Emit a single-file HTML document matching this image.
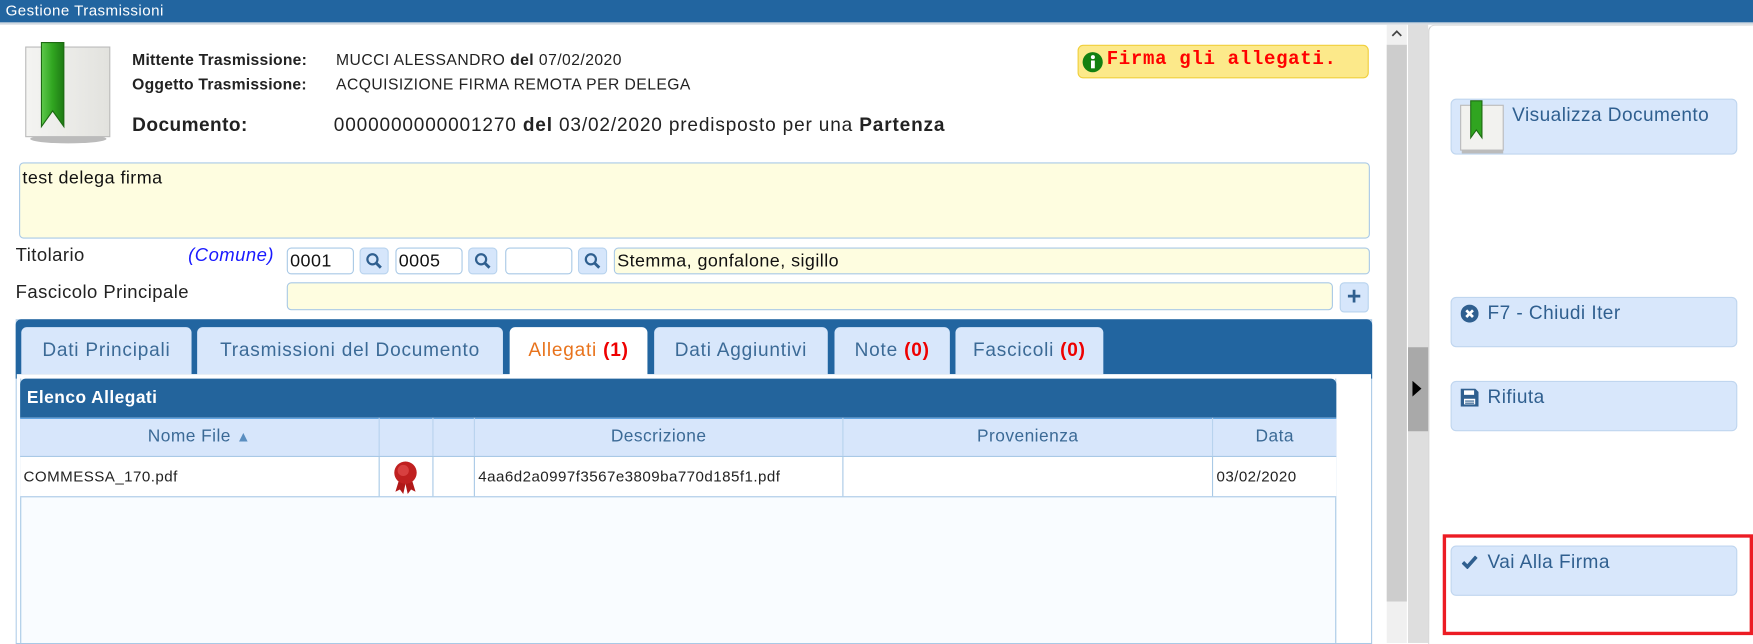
<!DOCTYPE html>
<html><head><meta charset="utf-8"><style>
html,body{margin:0;padding:0;width:1753px;height:643px;overflow:hidden;background:#fff}
#w{position:absolute;left:0;top:0;width:1565px;height:574px;transform:scale(1.12013);transform-origin:0 0;font-family:"Liberation Sans",sans-serif;color:#222;letter-spacing:0.4px}
.a{position:absolute}
.in{position:absolute;background:#fefde0;border:1px solid #a9c9e6;border-radius:4px;box-sizing:border-box;font-size:16px;padding:1px 2px;line-height:22px;color:#111}
.wh{background:#fff}
.sb{position:absolute;background:#d6e6fb;border:1px solid #b8d3ee;border-radius:4px;box-sizing:border-box}
.tab{position:absolute;top:292px;height:42px;background:#d8e7fb;border-radius:5px 5px 0 0;box-sizing:border-box;font-size:17px;color:#3b6a96;text-align:center;line-height:42px;letter-spacing:0.7px}
.red{color:#e00;font-weight:bold}
.btn{position:absolute;left:1295px;width:256px;background:#d8e7fb;border:1px solid #c0d6ef;border-radius:5px;box-sizing:border-box;font-size:17px;color:#2f5f8f}
.th{position:absolute;top:373px;height:34px;line-height:34px;font-size:15.5px;color:#3b6a96;text-align:center;border-right:1px solid #b8d3ee;box-sizing:border-box}
.td{position:absolute;top:408px;height:35px;line-height:35px;font-size:13.5px;color:#222;border-right:1px solid #a9c9e6;box-sizing:border-box;padding-left:3px}
</style></head><body><div id="w">
<div class="a" style="left:0;top:0;width:1565px;height:20px;background:#2265a0;color:#fff;font-size:13.5px;line-height:20px;padding-left:5px;box-sizing:border-box">Gestione Trasmissioni</div>
<div class="a" style="left:0;top:20px;width:1565px;height:2px;background:#d0d8e0"></div>
<svg class="a" style="left:20px;top:35px" width="82" height="95" viewBox="0 0 82 95"><defs><linearGradient id="g" x1="0" x2="1"><stop offset="0" stop-color="#f4f4f2"/><stop offset="1" stop-color="#e2e2de"/></linearGradient><linearGradient id="gr" x1="0" x2="1"><stop offset="0" stop-color="#5cc84a"/><stop offset=".5" stop-color="#30a520"/><stop offset="1" stop-color="#1e7a14"/></linearGradient></defs><ellipse cx="41" cy="89" rx="34" ry="4" fill="#bbb"/><rect x="3" y="7" width="75" height="80" fill="url(#g)" stroke="#bbb"/><path d="M17 3h20v75l-10-14-10 14z" fill="url(#gr)" stroke="#1d6a12"/></svg>
<div class="a" style="left:118px;top:42px;font-size:14px;line-height:22px;font-weight:bold;letter-spacing:0.2px">Mittente Trasmissione:<br>Oggetto Trasmissione:</div>
<div class="a" style="left:300px;top:42px;font-size:14px;line-height:22px">MUCCI ALESSANDRO <b>del</b> 07/02/2020<br>ACQUISIZIONE FIRMA REMOTA PER DELEGA</div>
<div class="a" style="left:118px;top:102px;font-size:17px;font-weight:bold">Documento:</div>
<div class="a" style="left:298px;top:102px;font-size:17px;letter-spacing:0.75px">0000000000001270 <b>del</b> 03/02/2020 predisposto per una <b>Partenza</b></div>
<div class="a" style="left:962px;top:40px;width:260px;height:30px;background:#fce98a;border:1px solid #f0cf3c;border-radius:5px;box-sizing:border-box"></div>
<svg class="a" style="left:966px;top:46px" width="19" height="19"><circle cx="9.5" cy="9.5" r="9" fill="#138010"/><rect x="8" y="8" width="3.4" height="7" fill="#fff"/><circle cx="9.7" cy="5" r="1.8" fill="#fff"/></svg>
<div class="a" style="left:988px;top:44px;font-family:'Liberation Mono',monospace;font-size:17px;font-weight:bold;color:#f00;letter-spacing:0.6px">Firma gli allegati.</div>
<div class="in" style="left:17px;top:145px;width:1206px;height:68px;padding:3px 2px">test delega firma</div>
<div class="a" style="left:14px;top:219px;font-size:16.5px">Titolario</div>
<div class="a" style="left:168px;top:219px;font-size:16.5px;font-style:italic;color:#1a1aff">(Comune)</div>
<div class="in wh" style="left:256px;top:221px;width:60px;height:24px">0001</div>
<div class="sb" style="left:321px;top:221px;width:26px;height:24px"></div>
<div class="in wh" style="left:353px;top:221px;width:60px;height:24px">0005</div>
<div class="sb" style="left:418px;top:221px;width:26px;height:24px"></div>
<div class="in wh" style="left:451px;top:221px;width:60px;height:24px"></div>
<div class="sb" style="left:516px;top:221px;width:26px;height:24px"></div>
<svg class="a" style="left:326px;top:225px" width="16" height="16"><circle cx="6.5" cy="6.5" r="4.5" fill="none" stroke="#2f5f8f" stroke-width="2"/><path d="M10 10l4 4" stroke="#2f5f8f" stroke-width="2.6"/></svg>
<svg class="a" style="left:423px;top:225px" width="16" height="16"><circle cx="6.5" cy="6.5" r="4.5" fill="none" stroke="#2f5f8f" stroke-width="2"/><path d="M10 10l4 4" stroke="#2f5f8f" stroke-width="2.6"/></svg>
<svg class="a" style="left:521px;top:225px" width="16" height="16"><circle cx="6.5" cy="6.5" r="4.5" fill="none" stroke="#2f5f8f" stroke-width="2"/><path d="M10 10l4 4" stroke="#2f5f8f" stroke-width="2.6"/></svg>
<div class="in" style="left:548px;top:221px;width:675px;height:24px">Stemma, gonfalone, sigillo</div>
<div class="a" style="left:14px;top:252px;font-size:16.5px">Fascicolo Principale</div>
<div class="in" style="left:256px;top:252px;width:934px;height:25px"></div>
<div class="sb" style="left:1196px;top:252px;width:26px;height:27px;color:#2f5f8f;font-size:22px;font-weight:bold;text-align:center;line-height:24px">+</div>
<div class="a" style="left:14px;top:285px;width:1211px;height:290px;border:1px solid #a9c9e6;box-sizing:border-box"></div>
<div class="a" style="left:14px;top:285px;width:1211px;height:53px;background:#2265a0;border-radius:5px 5px 0 0"></div>
<div class="tab" style="left:19px;width:152px">Dati Principali</div>
<div class="tab" style="left:176px;width:273px">Trasmissioni del Documento</div>
<div class="tab" style="left:455px;width:123px;background:#fff;color:#e8731c;height:46px">Allegati <span class="red">(1)</span></div>
<div class="tab" style="left:584px;width:155px">Dati Aggiuntivi</div>
<div class="tab" style="left:745px;width:103px">Note <span class="red">(0)</span></div>
<div class="tab" style="left:853px;width:132px">Fascicoli <span class="red">(0)</span></div>
<div class="a" style="left:15px;top:334px;width:1209px;height:240px;background:#fff"></div>
<div class="a" style="left:18px;top:338px;width:1175px;height:236px;background:#f9fcff;border-left:1px solid #a9c9e6;border-right:1px solid #a9c9e6;box-sizing:border-box"></div>
<div class="a" style="left:18px;top:338px;width:1175px;height:35px;background:#23649c;border-radius:5px 5px 0 0;color:#fff;font-weight:bold;font-size:15.5px;line-height:35px;padding-left:6px;box-sizing:border-box">Elenco Allegati</div>
<div class="a" style="left:18px;top:373px;width:1175px;height:35px;background:#d7e6fb;border-top:1px solid #58a0e0;border-bottom:1px solid #a9c9e6;box-sizing:border-box"></div>
<div class="th" style="left:18px;width:321px">Nome File <span style="color:#5a8ec0;font-size:13px">&#9650;</span></div>
<div class="th" style="left:339px;width:48px"></div>
<div class="th" style="left:387px;width:37px"></div>
<div class="th" style="left:424px;width:329px">Descrizione</div>
<div class="th" style="left:753px;width:330px">Provenienza</div>
<div class="th" style="left:1083px;width:110px;border-right:0">Data</div>
<div class="a" style="left:18px;top:408px;width:1175px;height:36px;background:#fff;border-bottom:1px solid #a9c9e6;box-sizing:border-box"></div>
<div class="td" style="left:18px;width:321px">COMMESSA_170.pdf</div>
<div class="td" style="left:339px;width:48px"></div>
<svg class="a" style="left:348px;top:410px" width="28" height="32"><path d="M9 16l-4 13 4-2 3 4 2-9zM19 16l4 13-4-2-3 4-2-9z" fill="#b01818"/><circle cx="14" cy="12" r="10" fill="#c02020"/><circle cx="12" cy="10" r="5" fill="#d84040"/></svg>
<div class="td" style="left:387px;width:37px"></div>
<div class="td" style="left:424px;width:329px">4aa6d2a0997f3567e3809ba770d185f1.pdf</div>
<div class="td" style="left:753px;width:330px"></div>
<div class="td" style="left:1083px;width:110px;border-right:0">03/02/2020</div>
<div class="a" style="left:1238px;top:22px;width:18px;height:552px;background:#f0f0f0"></div>
<div class="a" style="left:1238px;top:40px;width:18px;height:497px;background:#cdcdcd"></div>
<svg class="a" style="left:1242px;top:26px" width="10" height="8"><path d="M1 6l4-4 4 4" fill="none" stroke="#444" stroke-width="1.5"/></svg>
<div class="a" style="left:1257px;top:22px;width:18px;height:552px;background:#dedede"></div>
<div class="a" style="left:1257px;top:310px;width:18px;height:75px;background:#a9a9a9"></div>
<svg class="a" style="left:1260px;top:340px" width="10" height="14"><path d="M1 0l8 7-8 7z" fill="#000"/></svg>
<div class="a" style="left:1275px;top:22px;width:290px;height:552px;border-left:1px solid #ccc;border-top:1px solid #ddd;border-radius:6px 0 0 0;background:#fff"></div>
<div class="btn" style="top:88px;height:50px">
<svg class="a" style="left:6px;top:0" width="44" height="50" viewBox="0 0 44 50"><rect x="2" y="5" width="38" height="40" fill="#f2f2ef" stroke="#bbb"/><rect x="3" y="45" width="37" height="3" fill="#bbb"/><path d="M11 1h10v33l-5-7-5 7z" fill="#30a520" stroke="#1d6a12"/></svg>
<span class="a" style="left:54px;top:4px">Visualizza Documento</span></div>
<div class="btn" style="top:265px;height:45px">
<svg class="a" style="left:8px;top:6px" width="16" height="16"><circle cx="8" cy="8" r="8" fill="#2f5f8f"/><path d="M5 5l6 6M11 5l-6 6" stroke="#fff" stroke-width="2.4"/></svg>
<span class="a" style="left:32px;top:4px">F7 - Chiudi Iter</span></div>
<div class="btn" style="top:340px;height:45px">
<svg class="a" style="left:8px;top:6px" width="16" height="16"><path d="M0 0h13l3 3v13H0z" fill="#2f5f8f"/><rect x="3" y="1.5" width="9" height="4" fill="#fff"/><rect x="3" y="9" width="10" height="5" fill="#fff"/><path d="M4 11h8M4 13h8" stroke="#2f5f8f"/></svg>
<span class="a" style="left:32px;top:4px">Rifiuta</span></div>
<div class="a" style="left:1288px;top:477px;width:277px;height:90px;border:3px solid #ec1c24;box-sizing:border-box"></div>
<div class="btn" style="top:487px;height:45px">
<svg class="a" style="left:9px;top:8px" width="14" height="12"><path d="M1 6l4 4 8-9" fill="none" stroke="#2f5f8f" stroke-width="3.2"/></svg>
<span class="a" style="left:32px;top:4px">Vai Alla Firma</span></div>
</div></body></html>
